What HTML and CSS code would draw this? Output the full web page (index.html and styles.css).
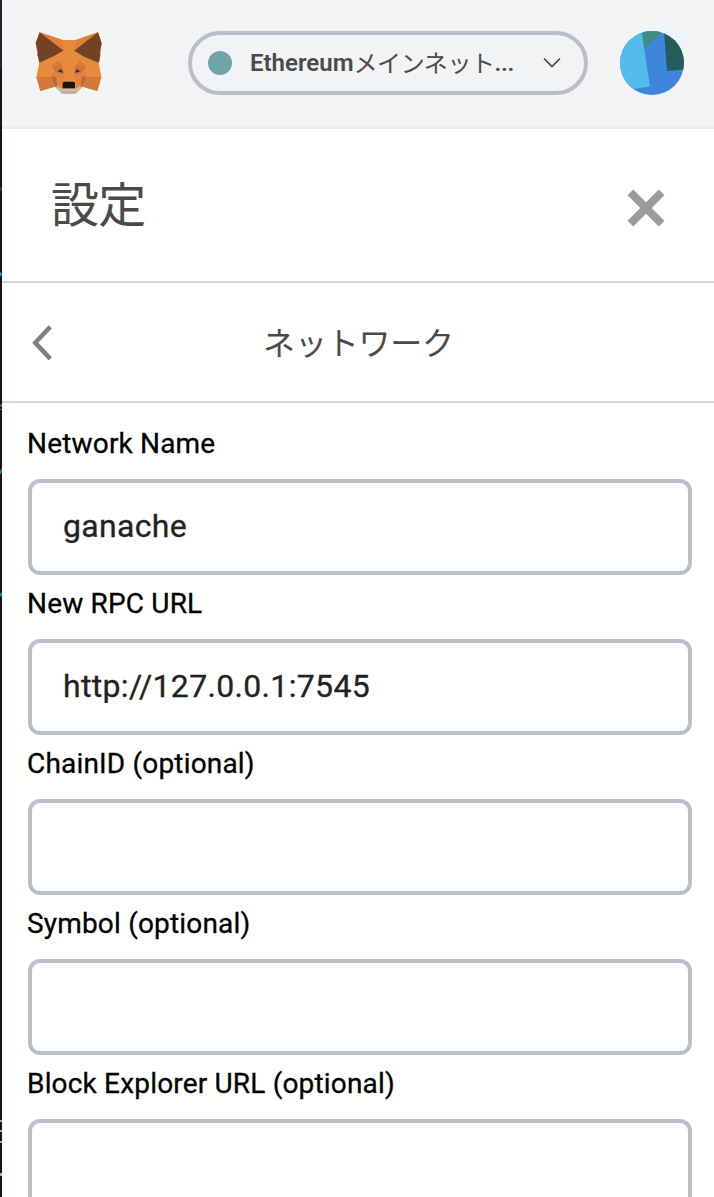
FILE: index.html
```html
<!DOCTYPE html>
<html lang="ja">
<head>
<meta charset="utf-8">
<title>設定</title>
<link rel="stylesheet" href="styles.css">
</head>
<body>
<div class="backdrop">
  <svg class="edge" width="2" height="1197" viewBox="0 0 2 1197">
    <rect width="2" height="70" fill="#20252c"/>
    <rect y="187" width="2" height="4" fill="#43343c"/>
    <path d="M0 272h1v1h1v3H0zM0 405l2-1v2l-2 1zM0 409h2v1H0zM0 471l2-3v4l-2 3zM0 594l2-2v3l-2 2z" fill="#2f7fae"/>
    <path d="M0 1120h2v2H0zM0 1130h2v2H0zM0 1141h2v2H0zM0 1173h2v3H0z" fill="#aaaab0"/>
  </svg>
  <main class="app">
    <header class="topbar">
      <svg class="fox" width="68" height="64" viewBox="27 27 204 192">
        <path d="M41 31L110 54H149L216 31L227 66L221 118L218 122L226 165L214 207L170 194L149 214H108L86 194L43 207L31 165L40 122L35 101L29 63Z" fill="#e88a3c"/>
        <path d="M41 31L110 54L113 84ZM216 31L149 54L144 84Z" fill="#df8039"/>
        <path d="M41 31L113 86L86 101L40 122L37 108L34 98L36 91L29 63ZM216 31L144 86L171 103L218 122L221 108L223 98L221 91L227 63Z" fill="#714224"/>
        <path d="M31 165H77L86 194L43 207ZM226 165H180L170 194L214 207Z" fill="#d47a39"/>
        <path d="M86 101L113 86V131H75ZM171 103L144 86V131H182Z" fill="#e88a3c"/>
        <path d="M77 132L98 114L109 131L113 158L108 183L77 165ZM181 132L160 114L149 131L145 158L149 183L180 165Z" fill="#d8793a"/>
        <path d="M77 132H109L113 158L88 151ZM181 132H149L145 158L170 151Z" fill="#cf7440"/>
        <path d="M77 132L88 151L91 164L40 122ZM181 132L170 151L167 164L218 122Z" fill="#e88a3c"/>
        <path d="M77 165L91 164L94 192L86 194ZM180 165L167 164L163 192L170 194Z" fill="#bf673a"/>
        <path d="M88 151L112 158L108 182L94 192L91 164ZM170 151L146 158L149 182L163 192L167 164Z" fill="#e0833c"/>
        <path d="M94 148L105 141L112 153ZM163 148L152 141L146 153Z" fill="#29394a"/>
        <path d="M88 192L109 200H148L169 192L149 214H108Z" fill="#cbbdb2"/>
        <path d="M98 204L110 207H148L159 204L149 215H108Z" fill="#beada0"/>
        <path d="M110 182L114 179H142L147 182V199H110Z" fill="#161616"/>
      </svg>
      <div class="network">
        <span class="dot"></span>
        <span class="network-name"><b>Ethereum</b><span class="kana">メインネット</span><b class="dots">...</b></span>
        <svg class="chevron" width="18" height="12" viewBox="0 0 18 12"><path d="M1 1.5L9 9.5L17 1.5" fill="none" stroke="#4a4a4a" stroke-width="1.7"/></svg>
      </div>
      <svg class="avatar" width="64" height="64" viewBox="0 0 64 64">
        <defs><clipPath id="disc"><circle cx="32" cy="32" r="32"/></clipPath></defs>
        <g clip-path="url(#disc)">
          <rect width="64" height="64" fill="#3d86dc"/>
          <path d="M21 0H43L24 18Z" fill="#408d80"/>
          <path d="M0 0H21.5L30 55.5L0 60Z" fill="#54bbed"/>
          <path d="M44 0H64V38.5L47 40Z" fill="#265d5c"/>
        </g>
      </svg>
    </header>
    <section class="title-row">
      <h1>設定</h1>
      <svg class="close" width="38" height="38" viewBox="0 0 38 38"><path d="M3.4 3.4L34.6 34.6M34.6 3.4L3.4 34.6" stroke="#9b9b9b" stroke-width="8" fill="none"/></svg>
    </section>
    <section class="sub-row">
      <svg class="back" width="22" height="36" viewBox="0 0 22 36"><path d="M19.3 2.8L4.3 18.8L19.3 34.8" fill="none" stroke="#808080" stroke-width="4.6"/></svg>
      <h2>ネットワーク</h2>
    </section>
    <form class="fields">
      <div class="field"><label>Network Name</label><div class="input"><span>ganache</span></div></div>
      <div class="field"><label>New RPC URL</label><div class="input"><span>http://127.0.0.1:7545</span></div></div>
      <div class="field"><label>ChainID (optional)</label><div class="input"></div></div>
      <div class="field"><label>Symbol (optional)</label><div class="input"></div></div>
      <div class="field"><label>Block Explorer URL (optional)</label><div class="input"></div></div>
    </form>
  </main>
</div>
</body>
</html>
```
FILE: styles.css
```css
* { box-sizing: border-box; }
body { margin: 0; font-family: Roboto, "Noto Sans CJK JP", sans-serif; }
.backdrop { display: flex; height: 1197px; overflow: hidden; background: #1d1018; }
.edge { flex: none; display: block; }
.app { flex: 1; background: #fff; }
.topbar { height: 129px; display: flex; padding: 31px 30px 0 33px; background: #f2f3f5; border-bottom: 2px solid #ebebed; }
.fox { flex: none; }
.network { display: flex; align-items: center; width: 400px; height: 64px; margin-left: 85px; padding: 0 23px 0 16px; border: 4px solid #bbbec6; border-radius: 32px; }
.dot { width: 24px; height: 24px; border-radius: 50%; background: #70a4a7; }
.network-name { display: flex; align-items: center; flex: 1; margin-left: 18px; font-size: 24px; line-height: 30px; color: #4a4a4a; white-space: nowrap; }
.network-name b { font-weight: 600; }
.kana { padding-bottom: 3px; font-family: "Noto Sans CJK JP", sans-serif; letter-spacing: -0.4px; }
.network-name .dots { letter-spacing: -0.4px; }
.avatar { margin-left: 32px; }
.title-row { height: 154px; display: flex; justify-content: space-between; align-items: center; padding: 5px 49px 0 49px; border-bottom: 2px solid #d8d8d8; }
h1, h2 { margin: 0; font-family: "Noto Sans CJK JP", sans-serif; font-weight: 400; color: #4a4a4a; }
h1 { padding-bottom: 14px; font-size: 48px; line-height: 60px; letter-spacing: -0.8px; }
.sub-row { height: 120px; display: flex; align-items: center; padding: 0 29px; border-bottom: 2px solid #d8d8d8; }
.sub-row h2 { flex: 1; padding: 0 21px 3px 0; text-align: center; font-size: 32px; line-height: 40px; letter-spacing: -0.2px; }
.fields { padding: 20px 22px 0 26px; }
.field { height: 160px; }
label { display: block; height: 56px; margin-left: -1px; padding-top: 1px; line-height: 40px; font-size: 28px; letter-spacing: 0.18px; color: #000; white-space: nowrap; -webkit-text-stroke: 0.3px #000; }
.input { height: 96px; display: flex; align-items: center; padding: 0 31px; border: 4px solid #bbbfc6; border-radius: 12px; background: #fff; }
.input span { height: 32px; overflow: hidden; font-size: 32px; line-height: 30px; letter-spacing: 0.33px; color: #222; -webkit-text-stroke: 0.3px #222; }
```
